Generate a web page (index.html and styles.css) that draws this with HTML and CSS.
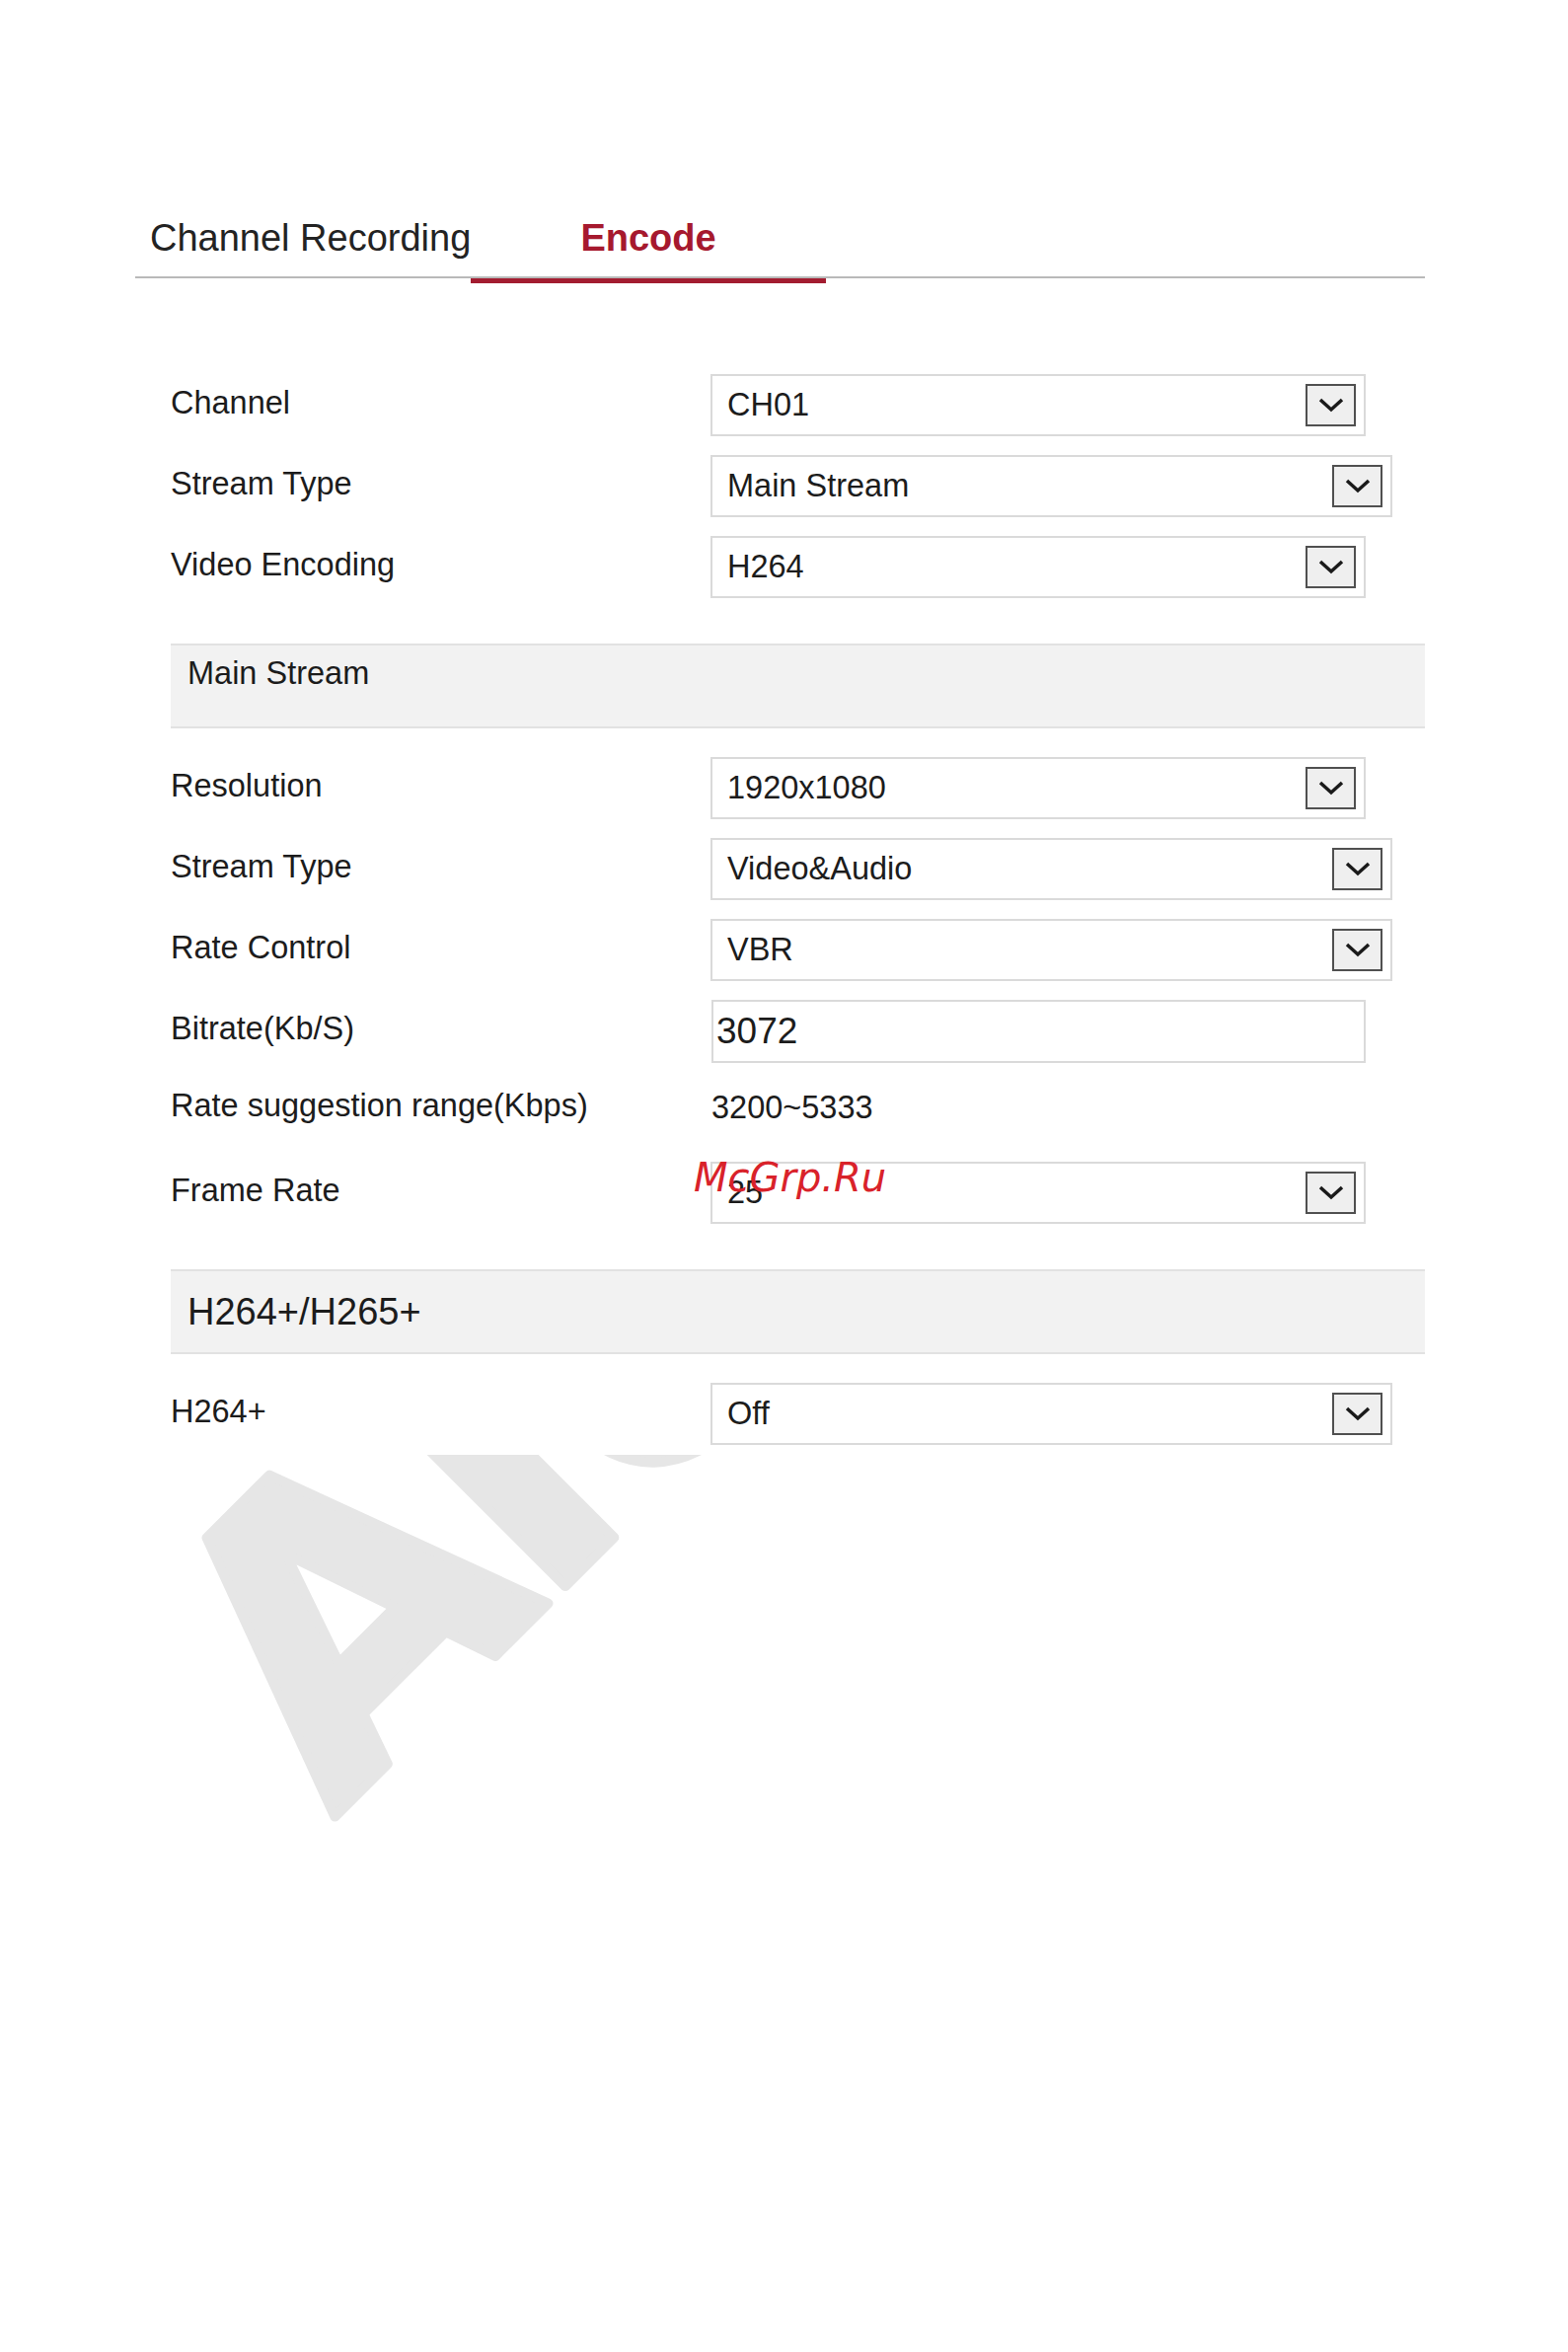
FILE: index.html
```html
<!DOCTYPE html>
<html lang="en">
<head>
<meta charset="utf-8">
<title>Encode</title>
<link rel="stylesheet" href="styles.css">
</head>
<body>
<svg class="bg-mark" width="1589" height="2383" viewBox="0 0 1589 2383" aria-hidden="true">
  <text x="338" y="1842" transform="rotate(-45 338 1842)" class="bg-mark-text">A<tspan dx="-11">l</tspan><tspan dx="0">o</tspan></text>
</svg>

<div class="page">
  <div class="tabs">
    <div class="tab">Channel Recording</div>
    <div class="tab tab-active">Encode</div>
  </div>

  <div class="form">
    <div class="row">
      <div class="label">Channel</div>
      <div class="select">CH01<span class="drop"><svg width="26" height="15" viewBox="0 0 26 15"><polyline points="2,2 13,12 24,2"/></svg></span></div>
    </div>
    <div class="row">
      <div class="label">Stream Type</div>
      <div class="select select-wide">Main Stream<span class="drop"><svg width="26" height="15" viewBox="0 0 26 15"><polyline points="2,2 13,12 24,2"/></svg></span></div>
    </div>
    <div class="row">
      <div class="label">Video Encoding</div>
      <div class="select">H264<span class="drop"><svg width="26" height="15" viewBox="0 0 26 15"><polyline points="2,2 13,12 24,2"/></svg></span></div>
    </div>

    <div class="section-head">Main Stream</div>

    <div class="row">
      <div class="label">Resolution</div>
      <div class="select">1920x1080<span class="drop"><svg width="26" height="15" viewBox="0 0 26 15"><polyline points="2,2 13,12 24,2"/></svg></span></div>
    </div>
    <div class="row">
      <div class="label">Stream Type</div>
      <div class="select select-wide">Video&amp;Audio<span class="drop"><svg width="26" height="15" viewBox="0 0 26 15"><polyline points="2,2 13,12 24,2"/></svg></span></div>
    </div>
    <div class="row">
      <div class="label">Rate Control</div>
      <div class="select select-wide">VBR<span class="drop"><svg width="26" height="15" viewBox="0 0 26 15"><polyline points="2,2 13,12 24,2"/></svg></span></div>
    </div>
    <div class="row">
      <div class="label">Bitrate(Kb/S)</div>
      <div class="input">3072</div>
    </div>
    <div class="row row-text">
      <div class="label">Rate suggestion range(Kbps)</div>
      <div class="value">3200~5333</div>
    </div>
    <div class="row">
      <div class="label">Frame Rate</div>
      <div class="select">25<span class="drop"><svg width="26" height="15" viewBox="0 0 26 15"><polyline points="2,2 13,12 24,2"/></svg></span></div>
    </div>

    <div class="section-head section-head-lg">H264+/H265+</div>

    <div class="row row-last">
      <div class="label">H264+</div>
      <div class="select select-wide">Off<span class="drop"><svg width="26" height="15" viewBox="0 0 26 15"><polyline points="2,2 13,12 24,2"/></svg></span></div>
    </div>
  </div>
</div>

<div class="site-mark">McGrp.Ru</div>
</body>
</html>
```

FILE: styles.css
```css
html, body {
  margin: 0;
  padding: 0;
  background: #ffffff;
}

body {
  position: relative;
  font-family: "Liberation Sans", Arial, sans-serif;
  color: #1c1c1c;
  min-height: 2383px;
}

.bg-mark {
  position: absolute;
  top: 0;
  left: 0;
  z-index: 0;
  pointer-events: none;
}

.bg-mark-text {
  font-family: "DejaVu Sans", sans-serif;
  font-weight: bold;
  font-size: 400px;
  fill: #e6e6e6;
  stroke: #e6e6e6;
  stroke-width: 10;
  stroke-linejoin: round;
}

.page {
  position: relative;
  z-index: 1;
  background: #ffffff;
  margin-left: 137px;
  width: 1307px;
  padding-top: 219px;
}

.tabs {
  display: flex;
  border-bottom: 2px solid #b9b9b9;
}

.tab {
  box-sizing: border-box;
  flex: none;
  white-space: nowrap;
  font-size: 38px;
  line-height: 44px;
  padding: 0 0 17px 15px;
  width: 340px;
  color: #232323;
}

.tab-active {
  position: relative;
  width: 360px;
  padding-left: 0;
  text-align: center;
  font-weight: bold;
  color: #a6192e;
}

.tab-active::after {
  content: "";
  position: absolute;
  left: 0;
  right: 0;
  top: calc(100% + 2px);
  height: 5px;
  background: #a31c30;
}

.form {
  display: flex;
  flex-direction: column;
  margin: 97px 0 0 36px;
  padding-bottom: 10px;
}

.row {
  display: flex;
  align-items: center;
  height: 63px;
  margin-bottom: 19px;
}

.row-text {
  height: 55px;
  margin-bottom: 27px;
}

.row-last {
  margin-bottom: 0;
}

.label {
  width: 547px;
  flex: none;
  font-size: 32.5px;
  padding-bottom: 5px;
  color: #1c1c1c;
}

.select {
  box-sizing: border-box;
  width: 664px;
  height: 63px;
  border: 2px solid #dadada;
  display: flex;
  align-items: center;
  justify-content: space-between;
  padding: 0 8px 0 15px;
  font-size: 32.5px;
  color: #1c1c1c;
}

.select-wide {
  width: 691px;
}

.drop {
  box-sizing: border-box;
  width: 51px;
  height: 43px;
  border: 2px solid #505050;
  background: #efefef;
  display: flex;
  align-items: center;
  justify-content: center;
}

.drop svg {
  display: block;
}

.drop polyline {
  fill: none;
  stroke: #1a1a1a;
  stroke-width: 3.5;
}

.input {
  box-sizing: border-box;
  width: 663px;
  height: 64px;
  margin-left: 1px;
  border: 2px solid #dadada;
  display: flex;
  align-items: center;
  padding-left: 3px;
  font-size: 37px;
  color: #1c1c1c;
}

.value {
  margin-left: 1px;
  font-size: 32.5px;
  color: #1c1c1c;
}

.section-head {
  box-sizing: border-box;
  height: 86px;
  margin: 27px 0 29px;
  background: #f2f2f2;
  border-top: 2px solid #e2e2e2;
  border-bottom: 2px solid #e2e2e2;
  padding: 10px 17px 0;
  font-size: 32.5px;
  color: #1c1c1c;
}

.section-head-lg {
  padding-top: 20px;
  font-size: 38px;
}

.site-mark {
  position: absolute;
  z-index: 3;
  left: 703px;
  top: 1173px;
  font-family: "DejaVu Sans", sans-serif;
  font-style: oblique;
  font-size: 40px;
  line-height: 40px;
  color: #d9222a;
}
```
